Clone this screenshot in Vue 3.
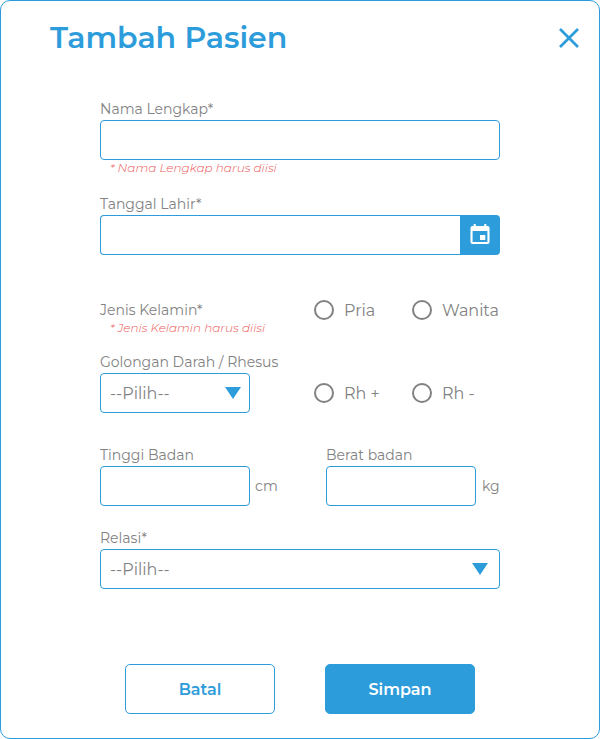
<script setup>
import { reactive } from 'vue'

const form = reactive({ nama: '', tanggal: '', tinggi: '', berat: '', kelamin: '', rhesus: '' })
</script>

<template>
  <main class="dialog">
    <header class="head">
      <h1>Tambah Pasien</h1>
      <button class="close" type="button" aria-label="Tutup">
        <svg width="20" height="20" viewBox="0 0 20 20">
          <path d="M1 1 19 19M19 1 1 19" stroke="currentColor" stroke-width="2.7" fill="none" />
        </svg>
      </button>
    </header>

    <form class="form" @submit.prevent>
      <div class="field name">
        <label for="nama">Nama Lengkap*</label>
        <input id="nama" v-model="form.nama" class="box" />
        <p class="error">* Nama Lengkap harus diisi</p>
      </div>

      <div class="field date">
        <label for="tanggal">Tanggal Lahir*</label>
        <div class="date-row">
          <input id="tanggal" v-model="form.tanggal" class="box" />
          <button class="calendar" type="button" aria-label="Kalender">
            <svg width="20" height="20" viewBox="2.55 1 18.9 20" preserveAspectRatio="none">
              <path fill="currentColor" d="M17 12h-5v5h5v-5zM16 1v2H8V1H6v2H5c-1.11 0-1.99.9-1.99 2L3 19c0 1.1.89 2 2 2h14c1.1 0 2-.9 2-2V5c0-1.1-.9-2-2-2h-1V1h-2zm3 18H5V8h14v11z" />
            </svg>
          </button>
        </div>
      </div>

      <div class="split gender">
        <div>
          <span class="caption">Jenis Kelamin*</span>
          <p class="error">* Jenis Kelamin harus diisi</p>
        </div>
        <div class="radios">
          <label v-for="o in ['Pria', 'Wanita']" :key="o" class="radio">
            <input v-model="form.kelamin" type="radio" name="kelamin" :value="o" /><span>{{ o }}</span>
          </label>
        </div>
      </div>

      <div class="field blood">
        <span class="label">Golongan Darah / Rhesus</span>
        <div class="split">
          <div class="box select short">
            <span>--Pilih--</span>
            <svg width="16" height="12" viewBox="0 0 16 12"><path d="M0 0h16L8 12z" fill="currentColor" /></svg>
          </div>
          <div class="radios">
            <label v-for="o in ['Rh +', 'Rh -']" :key="o" class="radio">
              <input v-model="form.rhesus" type="radio" name="rhesus" :value="o" /><span>{{ o }}</span>
            </label>
          </div>
        </div>
      </div>

      <div class="measures">
        <div class="field">
          <label for="tinggi">Tinggi Badan</label>
          <div class="unit-row height"><input id="tinggi" v-model="form.tinggi" class="box short" /><span>cm</span></div>
        </div>
        <div class="field">
          <label for="berat">Berat badan</label>
          <div class="unit-row"><input id="berat" v-model="form.berat" class="box short" /><span>kg</span></div>
        </div>
      </div>

      <div class="field relation">
        <span class="label">Relasi*</span>
        <div class="box select wide">
          <span>--Pilih--</span>
          <svg width="16" height="12" viewBox="0 0 16 12"><path d="M0 0h16L8 12z" fill="currentColor" /></svg>
        </div>
      </div>

      <footer class="actions">
        <button class="btn" type="button">Batal</button>
        <button class="btn primary" type="submit">Simpan</button>
      </footer>
    </form>
  </main>
</template>

<style>
body { margin: 0; background: #fff; }
</style>

<style scoped>
* { box-sizing: border-box; }
.dialog {
  width: 600px;
  height: 739px;
  border: 1px solid #2d9cdb;
  border-radius: 10px;
  background: #fff;
  font-family: Montserrat, Inter, sans-serif;
  font-size: 14px;
  color: #828282;
}
button, input { font: inherit; margin: 0; padding: 0; }
.head {
  display: flex;
  align-items: center;
  justify-content: space-between;
  height: 73px;
  padding: 0 20px 0 49px;
  color: #2d9cdb;
}
h1 { margin: 0; font-size: 30px; font-weight: 600; line-height: 37px; }
.close { display: flex; border: 0; background: none; color: inherit; }
.form { padding: 24px 99px 0; }
.field { display: flex; flex-direction: column; }
.field > label, .label { height: 22px; line-height: 22px; }
.box {
  width: 100%;
  height: 40px;
  border: 1px solid #2d9cdb;
  border-radius: 4px;
  background: #fff;
  outline: none;
}
.short { width: 150px; }
.error {
  margin: 0;
  padding-left: 10px;
  font-size: 12px;
  font-style: italic;
  font-weight: 300;
  line-height: 16px;
  color: #eb5757;
}
.name { height: 95px; }
.date { height: 107px; }
.date-row { display: flex; }
.date-row .box { flex: 1; border-right: 0; border-radius: 4px 0 0 4px; }
.calendar {
  display: flex;
  align-items: center;
  justify-content: center;
  width: 40px;
  height: 40px;
  padding-bottom: 2px;
  border: 0;
  border-radius: 0 4px 4px 0;
  background: #2d9cdb;
  color: #fff;
}
.split { display: grid; grid-template-columns: 214px 1fr; }
.gender { height: 51px; }
.caption { display: block; height: 20px; line-height: 20px; }
.radios {
  display: grid;
  grid-template-columns: 98px 1fr;
  align-items: center;
  align-self: start;
  height: 20px;
}
.blood .radios { height: 40px; }
.radio { display: flex; align-items: center; gap: 10px; height: 20px; font-size: 16px; white-space: nowrap; }
.radio span, .select span { padding-top: 2px; line-height: 20px; }
.radio input {
  flex: none;
  appearance: none;
  width: 20px;
  height: 20px;
  border: 2px solid #828282;
  border-radius: 50%;
}
.radio input:checked { background: radial-gradient(#828282 45%, transparent 50%); }
.blood { height: 93px; }
.select { display: flex; align-items: center; justify-content: space-between; padding: 0 8px 0 9px; font-size: 16px; }
.select svg { color: #2d9cdb; }
.wide { padding-right: 11px; }
.measures { display: grid; grid-template-columns: 226px 1fr; height: 83px; }
.unit-row { display: flex; align-items: center; gap: 6px; }
.unit-row.height { gap: 5px; }
.relation { height: 137px; }
.actions { display: flex; gap: 50px; padding-left: 25px; }
.btn {
  width: 150px;
  height: 50px;
  border: 1px solid #2d9cdb;
  border-radius: 5px;
  background: #fff;
  color: #2d9cdb;
  font-size: 16px;
  font-weight: 600;
}
.primary { background: #2d9cdb; color: #fff; }
</style>
